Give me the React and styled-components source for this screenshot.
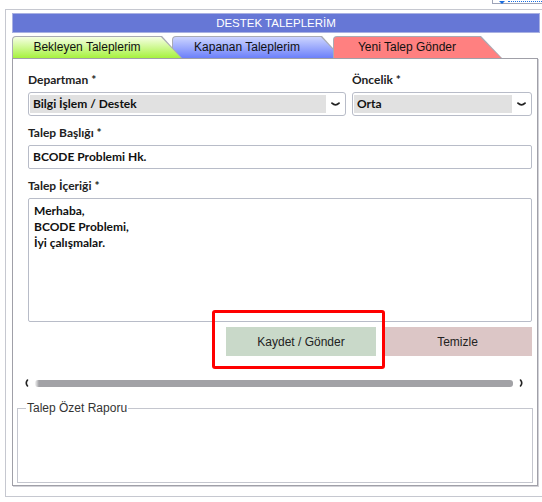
import React from "react"
import styled, { createGlobalStyle } from "styled-components"

const GlobalStyle = createGlobalStyle`
  html, body {
    margin: 0;
    padding: 0;
    background: #fff;
  }
  body {
    font-family: "Liberation Sans", Arial, sans-serif;
    color: #222;
    overflow: hidden;
  }
`

const TopBar = styled.div`
  display: flex;
  justify-content: flex-end;
`

const Picker = styled.div`
  width: 50px;
  height: 4px;
  box-sizing: border-box;
  border-left: 1px solid #9ea4b8;
  border-bottom: 1px solid #9ea4b8;
  display: flex;
  align-items: flex-start;
  gap: 3px;
  padding-left: 6px;
`

const PickerArrow = styled.span`
  width: 0;
  height: 0;
  border-left: 3px solid transparent;
  border-right: 3px solid transparent;
  border-top: 3px solid #1a6ee0;
  margin-top: 1px;
`

const PickerDots = styled.span`
  flex: 1;
  margin-top: 1px;
  border-top: 1px dotted #1a6ee0;
`

const Frame = styled.div`
  margin: 5px 0 0 5px;
  border-top: 1px solid #c6c8d0;
  border-left: 1px solid #c6c8d0;
  border-bottom: 1px solid #c6c8d0;
  padding: 3px 4px 10px 6px;
`

const Header = styled.div`
  height: 20px;
  margin-right: -2px;
  box-sizing: border-box;
  border: 1px solid #a9b1e2;
  background: #6677d6;
  color: #fff;
  font-size: 11.5px;
  line-height: 18px;
  text-align: center;
`

const TabRow = styled.div`
  display: flex;
  margin-top: 3px;
  height: 22px;
`

const tabClip = (slant) =>
  `polygon(0 0, calc(100% - ${slant}px) 0, 100% 100%, 0 100%)`

const Tab = styled.div`
  position: relative;
  z-index: ${(p) => p.$layer};
  width: ${(p) => p.$width}px;
  margin-left: ${(p) => p.$overlap}px;
  padding: 1px 1px 0 1px;
  box-sizing: border-box;
  background: #a9abb4;
  border-top-left-radius: 4px;
  clip-path: ${(p) => tabClip(p.$slant)};
  display: flex;
`

const TabFace = styled.div`
  flex: 1;
  border-top-left-radius: 3px;
  background: ${(p) => p.$fill};
  clip-path: ${(p) => tabClip(p.$slant)};
  padding-right: ${(p) => p.$slant}px;
  font-size: 12px;
  line-height: 21px;
  color: #111;
  text-align: center;
`

const Panel = styled.div`
  border: 1px solid #a0a0a8;
  box-shadow: 1px 1px 0 #d2d2d8;
  padding: 13px 4px 2px 4px;
`

const Form = styled.div`
  padding-left: 11px;
  padding-right: 1px;
  font-family: Lato, "Liberation Sans", sans-serif;
`

const FieldGrid = styled.div`
  display: grid;
  grid-template-columns: 1fr 180px;
  column-gap: 6px;
`

const Field = styled.div`
  display: flex;
  flex-direction: column;
  margin-bottom: ${(p) => (p.$last ? 0 : 9)}px;
`

const Label = styled.label`
  font-size: 12px;
  font-weight: 700;
  line-height: 16px;
  color: #222;
  margin-bottom: 4px;
`

const SelectBox = styled.div`
  height: 24px;
  box-sizing: border-box;
  border: 1px solid #b8bcc8;
  border-radius: 3px;
  padding: 2px 0 2px 1px;
  display: flex;
`

const SelectValue = styled.div`
  flex: 1;
  background: #e1e1e1;
  font-size: 12px;
  font-weight: 700;
  line-height: 18px;
  padding-left: 3px;
  color: #111;
`

const Caret = styled.div`
  width: 19px;
  display: flex;
  align-items: center;
  justify-content: center;
`

const TextInput = styled.div`
  height: 24px;
  box-sizing: border-box;
  border: 1px solid #b8bcc8;
  border-radius: 2px;
  padding-left: 4px;
  font-size: 12px;
  font-weight: 700;
  line-height: 22px;
  color: #111;
`

const TextArea = styled.div`
  height: 124px;
  box-sizing: border-box;
  border: 1px solid #b8bcc8;
  border-radius: 2px;
  padding: 4px 5px;
  font-size: 12px;
  font-weight: 700;
  line-height: 16px;
  color: #111;
  white-space: pre-line;
`

const ButtonRow = styled.div`
  display: flex;
  justify-content: flex-end;
  gap: 7px;
  margin-top: 5px;
`

const ButtonWrap = styled.div`
  position: relative;
`

const Button = styled.button`
  display: block;
  width: ${(p) => p.$width}px;
  height: 29px;
  border: none;
  border-radius: 0;
  background: ${(p) => p.$bg};
  font-family: "Liberation Sans", Arial, sans-serif;
  font-size: 12px;
  color: #222;
  padding: 0;
`

const Highlight = styled.div`
  position: absolute;
  left: -14px;
  right: -9px;
  top: -17px;
  bottom: -13px;
  border: 3px solid #f00;
  border-radius: 3px;
  pointer-events: none;
`

const ScrollRow = styled.div`
  display: flex;
  align-items: center;
  gap: 6px;
  margin-top: 23px;
  padding-left: 7px;
  padding-right: 9px;
  height: 8px;
`

const ScrollTrack = styled.div`
  flex: 1;
  height: 7px;
  border-radius: 3px;
  background: linear-gradient(90deg, #f4f4f4 0, #a2a2a6 4px, #a2a2a6 100%);
`

const Report = styled.fieldset`
  margin: 14px 0 0 0;
  padding: 0 8px;
  height: 82px;
  box-sizing: border-box;
  border: 1px solid #c4c6ce;
  font-family: "Liberation Sans", Arial, sans-serif;
`

const ReportTitle = styled.legend`
  font-size: 12px;
  color: #333;
  padding: 0 1px;
`

const ChevronDown = () => (
  <svg width="9" height="5" viewBox="0 0 9 5">
    <path d="M1 1.2 Q4.5 4.6 8 1.2" fill="none" stroke="#222" strokeWidth="1.8" strokeLinecap="round" />
  </svg>
)

const ScrollCap = ({ dir }) => (
  <svg width="5" height="8" viewBox="0 0 5 8">
    <path
      d={dir === "left" ? "M3.5 1 Q1 4 3.5 7" : "M1.5 1 Q4 4 1.5 7"}
      fill="none"
      stroke="#222"
      strokeWidth="1.6"
      strokeLinecap="round"
    />
  </svg>
)

const tabs = [
  { name: "Bekleyen Taleplerim", width: 170, slant: 20, overlap: 0, layer: 3, fill: "linear-gradient(#f6ffe4, #a6f23e)" },
  { name: "Kapanan Taleplerim", width: 170, slant: 20, overlap: -10, layer: 1, fill: "linear-gradient(#ccd4ff, #6c80fa)" },
  { name: "Yeni Talep Gönder", width: 169, slant: 21, overlap: -9, layer: 2, fill: "#ff8080" },
]

export default function App() {
  return (
    <>
      <GlobalStyle />
      <TopBar>
        <Picker>
          <PickerArrow />
          <PickerDots />
        </Picker>
      </TopBar>
      <Frame>
        <Header>DESTEK TALEPLERİM</Header>
        <TabRow>
          {tabs.map((tab) => (
            <Tab key={tab.name} $width={tab.width} $slant={tab.slant} $overlap={tab.overlap} $layer={tab.layer}>
              <TabFace $fill={tab.fill} $slant={tab.slant}>
                {tab.name}
              </TabFace>
            </Tab>
          ))}
        </TabRow>
        <Panel>
          <Form>
            <FieldGrid>
              <Field>
                <Label>Departman *</Label>
                <SelectBox>
                  <SelectValue>Bilgi İşlem / Destek</SelectValue>
                  <Caret>
                    <ChevronDown />
                  </Caret>
                </SelectBox>
              </Field>
              <Field>
                <Label>Öncelik *</Label>
                <SelectBox>
                  <SelectValue>Orta</SelectValue>
                  <Caret>
                    <ChevronDown />
                  </Caret>
                </SelectBox>
              </Field>
            </FieldGrid>
            <Field>
              <Label>Talep Başlığı *</Label>
              <TextInput>BCODE Problemi Hk.</TextInput>
            </Field>
            <Field $last>
              <Label>Talep İçeriği *</Label>
              <TextArea>{"Merhaba,\nBCODE Problemi,\nİyi çalışmalar."}</TextArea>
            </Field>
            <ButtonRow>
              <ButtonWrap>
                <Button $width={150} $bg="#c9d9c9">Kaydet / Gönder</Button>
                <Highlight />
              </ButtonWrap>
              <Button $width={149} $bg="#dcc6c6">Temizle</Button>
            </ButtonRow>
          </Form>
          <ScrollRow>
            <ScrollCap dir="left" />
            <ScrollTrack />
            <ScrollCap dir="right" />
          </ScrollRow>
          <Report>
            <ReportTitle>Talep Özet Raporu</ReportTitle>
          </Report>
        </Panel>
      </Frame>
    </>
  )
}
